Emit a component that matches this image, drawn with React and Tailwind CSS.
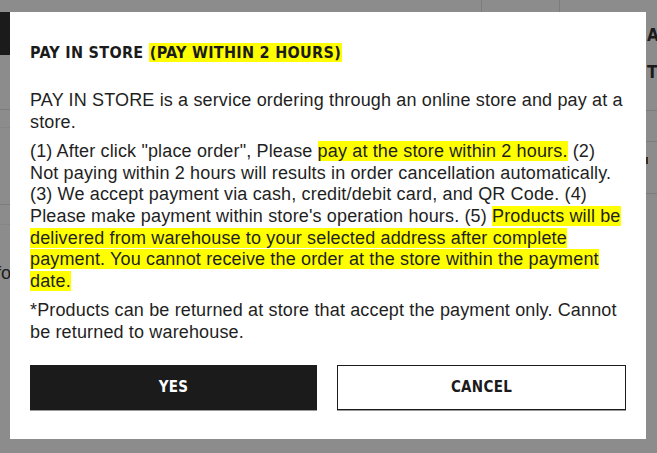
import React from "react";

const HL = ({ children }) => (
  <span className="bg-[#ffff00] [box-decoration-break:clone] [-webkit-box-decoration-break:clone]">{children}</span>
);

const cond = { fontFamily: '"Liberation Sans Narrow", "DejaVu Sans Condensed", "Liberation Sans", sans-serif' };

export default function App() {
  return (
    <div className="relative w-[657px] h-[453px] overflow-hidden bg-[#8c8c8c] text-[#1b1b1b]" style={{ fontFamily: '"Liberation Sans", Arial, sans-serif' }}>
      {/* dimmed page behind the dialog */}
      <div className="flex h-full">
        <div className="w-[10px] flex flex-col overflow-hidden">
          <div className="h-[12px] shrink-0" />
          <div className="h-[43px] shrink-0 bg-[#1b1b1b]" />
          <div className="h-[55px] shrink-0 border-b border-[#7c7c7c]" />
          <div className="h-[18px] shrink-0 border-b border-[#858585]" />
          <div className="h-[77px] shrink-0 border-b border-[#7c7c7c]" />
          <div className="h-[20px] shrink-0 border-b border-[#858585]" />
          <div className="h-[58px] shrink-0 flex items-end">
            <span className="ml-[-4px] text-[18px] leading-[20px] whitespace-nowrap">fo</span>
          </div>
        </div>
        <div className="flex-1 flex flex-col">
          <div className="h-[12px] flex">
            <div className="w-[472px] border-r border-[#7c7c7c]" />
            <div className="w-[78px] border-r border-[#7c7c7c]" />
          </div>
        </div>
        <div className="w-[11px] flex flex-col overflow-hidden pl-[1px] font-bold text-[17px]" style={cond}>
          <div className="h-[24px] shrink-0" />
          <div className="h-[22px] leading-[22px]">A</div>
          <div className="h-[15px] shrink-0" />
          <div className="h-[22px] leading-[22px] whitespace-nowrap">TO</div>
          <div className="h-[28px] shrink-0 border-b border-[#7c7c7c] -ml-[1px]" />
          <div className="h-[31px] shrink-0 border-b border-[#7c7c7c] -ml-[1px]" />
          <div className="h-[22px] shrink-0 flex items-end -ml-[1px]">
            <div className="w-[2px] h-[7px] bg-[#3a2a20]" />
          </div>
          <div className="h-[30px] shrink-0 border-b border-[#7c7c7c] -ml-[1px]" />
        </div>
      </div>

      {/* dialog */}
      <div className="absolute left-[10px] top-[12px] w-[636px] h-[427px] bg-white px-[20px] pt-[31px] text-[#1b1b1b]">
        <h2 className="text-[16px] font-bold tracking-[0.3px] leading-[20px]" style={cond}>
          PAY IN STORE <span className="bg-[#ffff00] px-[1px]">(PAY WITHIN 2 HOURS)</span>
        </h2>
        <div className="mt-[27px] text-[18px] tracking-[0.15px] leading-[21.6px] text-[#1f1f1f]">
          <p>PAY IN STORE is a service ordering through an online store and pay at a store.</p>
          <p className="mt-[8px]">
            (1) After click "place order", Please <HL>pay at the store within 2 hours.</HL> (2) Not paying within 2 hours will results in order cancellation automatically. (3) We accept payment via cash, credit/debit card, and QR Code. (4) Please make payment within store's operation hours. (5) <HL>Products will be delivered from warehouse to your selected address after complete payment. You cannot receive the order at the store within the payment date.</HL>
          </p>
          <p className="mt-[8px]">*Products can be returned at store that accept the payment only. Cannot be returned to warehouse.</p>
        </div>
        <div className="mt-[21px] flex gap-[20px]">
          <button className="flex-1 h-[45px] bg-[#1b1b1b] text-white text-[15px] font-bold tracking-[0.3px] shadow-[0_1px_0_#9a9a9a]" style={cond}>YES</button>
          <button className="flex-1 h-[45px] bg-white border border-[#1b1b1b] text-[#1b1b1b] text-[15px] font-bold tracking-[0.3px] shadow-[0_1px_0_#9a9a9a]" style={cond}>CANCEL</button>
        </div>
      </div>
    </div>
  );
}
